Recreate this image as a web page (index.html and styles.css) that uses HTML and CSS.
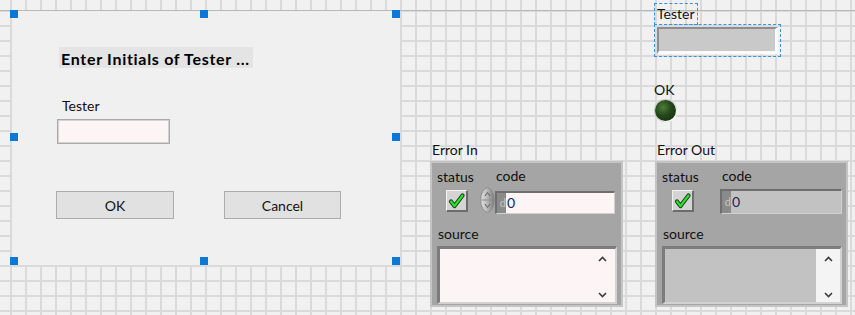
FILE: index.html
```html
<!DOCTYPE html>
<html lang="en">
<head>
    <meta charset="UTF-8">
    <title>Front Panel</title>
    <link rel="stylesheet" href="styles.css">
</head>
<body>
    <div class="panel">

        <!-- selected subpanel with the initials dialog -->
        <div class="dialog">
            <span class="handle h-tl"></span>
            <span class="handle h-tc"></span>
            <span class="handle h-tr"></span>
            <span class="handle h-ml"></span>
            <span class="handle h-mr"></span>
            <span class="handle h-bl"></span>
            <span class="handle h-bc"></span>
            <span class="handle h-br"></span>

            <div class="dialog-title">Enter Initials of Tester ...</div>
            <label class="dialog-label">Tester</label>
            <div class="dialog-input"></div>
            <div class="dialog-buttons">
                <button class="btn btn-ok">OK</button>
                <button class="btn btn-cancel">Cancel</button>
            </div>
        </div>

        <!-- Tester string indicator (selected) -->
        <div class="ctl tester-ctl">
            <span class="ctl-label sel-label">Tester</span>
            <div class="string-box">
                <div class="string-ind"></div>
            </div>
        </div>

        <!-- OK boolean LED -->
        <div class="ctl led-ctl">
            <span class="ctl-label">OK</span>
            <span class="led"></span>
        </div>

        <!-- Error In cluster -->
        <div class="ctl error-ctl error-in">
            <span class="ctl-label">Error In</span>
            <div class="cluster">
                <div class="cluster-top">
                    <div class="status-col">
                        <span class="field-label">status</span>
                        <span class="check-btn">
                            <svg width="18" height="18" viewBox="0 0 18 18">
                                <path d="M3 9.5 L6.5 14 L14.5 3.5" fill="none" stroke="#163f16" stroke-width="4.2" stroke-linecap="round" stroke-linejoin="round"/>
                                <path d="M3 9.5 L6.5 14 L14.5 3.5" fill="none" stroke="#2ee02e" stroke-width="2.2" stroke-linecap="round" stroke-linejoin="round"/>
                            </svg>
                        </span>
                    </div>
                    <div class="code-col">
                        <span class="field-label code-label">code</span>
                        <div class="code-row">
                            <svg class="spin" width="15" height="26" viewBox="0 0 15 26">
                                <defs>
                                    <linearGradient id="spinFill" x1="0" x2="1">
                                        <stop offset="0" stop-color="#e4e4e4"/>
                                        <stop offset="0.5" stop-color="#b4b4b4"/>
                                        <stop offset="1" stop-color="#7c7c7c"/>
                                    </linearGradient>
                                </defs>
                                <ellipse cx="7.5" cy="13" rx="6.8" ry="12.3" fill="url(#spinFill)" stroke="#8c8c8c"/>
                                <line x1="1.5" y1="13" x2="13.5" y2="13" stroke="#8a8a8a"/>
                                <path d="M5 9 L7.5 5.5 L10 9" fill="none" stroke="#5e5e5e"/>
                                <path d="M5 17 L7.5 20.5 L10 17" fill="none" stroke="#5e5e5e"/>
                            </svg>
                            <div class="numeric">
                                <span class="radix">d</span>
                                <span class="num-value">0</span>
                            </div>
                        </div>
                    </div>
                </div>
                <span class="field-label source-label">source</span>
                <div class="source-box">
                    <div class="source-text"></div>
                    <div class="scrollbar">
                        <svg width="9" height="6" viewBox="0 0 9 6"><path d="M1 5 L4.5 1.5 L8 5" fill="none" stroke="#3c3c3c" stroke-width="1.6"/></svg>
                        <svg width="9" height="6" viewBox="0 0 9 6"><path d="M1 1 L4.5 4.5 L8 1" fill="none" stroke="#3c3c3c" stroke-width="1.6"/></svg>
                    </div>
                </div>
            </div>
        </div>

        <!-- Error Out cluster -->
        <div class="ctl error-ctl error-out">
            <span class="ctl-label">Error Out</span>
            <div class="cluster">
                <div class="cluster-top">
                    <div class="status-col">
                        <span class="field-label">status</span>
                        <span class="check-btn">
                            <svg width="18" height="18" viewBox="0 0 18 18">
                                <path d="M3 9.5 L6.5 14 L14.5 3.5" fill="none" stroke="#163f16" stroke-width="4.2" stroke-linecap="round" stroke-linejoin="round"/>
                                <path d="M3 9.5 L6.5 14 L14.5 3.5" fill="none" stroke="#2ee02e" stroke-width="2.2" stroke-linecap="round" stroke-linejoin="round"/>
                            </svg>
                        </span>
                    </div>
                    <div class="code-col">
                        <span class="field-label code-label">code</span>
                        <div class="code-row">
                            <div class="numeric">
                                <span class="radix">d</span>
                                <span class="num-value">0</span>
                            </div>
                        </div>
                    </div>
                </div>
                <span class="field-label source-label">source</span>
                <div class="source-box">
                    <div class="source-text"></div>
                    <div class="scrollbar">
                        <svg width="9" height="6" viewBox="0 0 9 6"><path d="M1 5 L4.5 1.5 L8 5" fill="none" stroke="#3c3c3c" stroke-width="1.6"/></svg>
                        <svg width="9" height="6" viewBox="0 0 9 6"><path d="M1 1 L4.5 4.5 L8 1" fill="none" stroke="#3c3c3c" stroke-width="1.6"/></svg>
                    </div>
                </div>
            </div>
        </div>

    </div>
</body>
</html>
```

FILE: styles.css
```css
/* Global */
body {
    margin: 0;
    font-family: Lato, 'Open Sans', sans-serif;
    font-size: 14px;
    color: #111;
}

/* Front panel canvas with the alignment grid */
.panel {
    position: relative;
    width: 855px;
    height: 315px;
    overflow: hidden;
    background-color: #f1f1f1;
    background-image:
        linear-gradient(#b8b8b8, #b8b8b8),
        linear-gradient(to right, #dadada 2px, transparent 2px),
        linear-gradient(to bottom, #dadada 2px, transparent 2px);
    background-size: 100% 1px, 15px 15px, 15px 15px;
    background-position: 0 10px, 10px 0, 0 10px;
    background-repeat: no-repeat, repeat, repeat;
}

.ctl {
    position: absolute;
}

.ctl-label {
    display: block;
    line-height: 18px;
}

/* Dialog subpanel */
.dialog {
    position: absolute;
    left: 12px;
    top: 11px;
    width: 388px;
    height: 254px;
    box-sizing: border-box;
    padding: 36px 0 0 44px;
    background-color: #f0f0f0;
}

.handle {
    position: absolute;
    width: 8px;
    height: 8px;
    background-color: #0a78d7;
}

.h-tl { left: -2px; top: -1px; }
.h-tc { left: 188px; top: -1px; }
.h-tr { left: 380px; top: -1px; }
.h-ml { left: -2px; top: 122px; }
.h-mr { left: 380px; top: 122px; }
.h-bl { left: -2px; top: 246px; }
.h-bc { left: 188px; top: 246px; }
.h-br { left: 380px; top: 246px; }

.dialog-title {
    margin-left: 3px;
    width: 194px;
    height: 21px;
    box-sizing: border-box;
    padding: 1px 0 0 2px;
    background-color: #e4e4e4;
    font-weight: bold;
    font-size: 16px;
    line-height: 21px;
    letter-spacing: 0.7px;
    color: #000;
    white-space: nowrap;
}

.dialog-label {
    display: block;
    margin: 29px 0 0 6px;
    line-height: 18px;
}

.dialog-input {
    margin: 4px 0 0 1px;
    width: 113px;
    height: 25px;
    box-sizing: border-box;
    border: 1px solid #a9a9a9;
    box-shadow: inset 0 0 0 1px #d2d2d2;
    background-color: #fdf5f5;
}

.dialog-buttons {
    display: flex;
    gap: 50px;
    margin-top: 47px;
}

.btn {
    width: 118px;
    height: 28px;
    padding: 0;
    border: 1px solid #adadad;
    background-color: #e1e1e1;
    font-family: Lato, 'Open Sans', sans-serif;
    font-size: 14px;
    color: #111;
}

.btn-cancel {
    width: 117px;
}

/* Tester string indicator */
.tester-ctl {
    left: 654px;
    top: 3px;
}

.sel-label {
    display: inline-block;
    padding: 1px 2px;
    border: 1px dashed #3b8fdc;
}

.string-box {
    margin-top: -1px;
    width: 127px;
    height: 33px;
    box-sizing: border-box;
    padding: 2px;
    border: 1px dashed #3b8fdc;
}

.string-ind {
    height: 100%;
    box-sizing: border-box;
    border-style: solid;
    border-width: 2px 3px 3px 2px;
    border-color: #8e8e8e #fbfbfb #fbfbfb #8e8e8e;
    background-color: #c9c9c9;
}

/* OK LED */
.led-ctl {
    left: 654px;
    top: 81px;
}

.led {
    display: block;
    margin: 1px 0 0 1px;
    width: 21px;
    height: 21px;
    border-radius: 50%;
    background: radial-gradient(circle at 38% 35%, #4d7d3b 0, #24461a 45%, #132a0c 100%);
    box-shadow: 1px 1px 1px #ffffff, 0 0 0 1px #c8c8c8;
}

/* Error clusters */
.error-in {
    left: 430px;
    top: 141px;
}

.error-out {
    left: 655px;
    top: 141px;
}

.error-ctl .ctl-label {
    padding-left: 2px;
}

.cluster {
    margin-top: 2px;
    width: 193px;
    height: 146px;
    box-sizing: border-box;
    padding-top: 4px;
    border: 2px solid #c4c4c4;
    background-color: #a5a5a5;
}

.cluster-top {
    display: flex;
}

.status-col {
    display: flex;
    flex-direction: column;
    width: 48px;
}

.error-out .status-col {
    width: 63px;
}

.field-label {
    display: block;
    line-height: 18px;
    color: #111;
}

.status-col .field-label {
    margin: 1px 0 0 5px;
}

.check-btn {
    display: flex;
    align-items: center;
    justify-content: center;
    margin: 4px 0 0 14px;
    width: 22px;
    height: 22px;
    box-sizing: border-box;
    border-style: solid;
    border-width: 1px 2px 2px 1px;
    border-color: #f2f2f2 #6c6c6c #6c6c6c #f2f2f2;
    background-color: #d4d4d4;
}

.error-out .check-btn {
    margin-left: 15px;
}

.code-label {
    margin-left: 16px;
}

.error-out .code-label {
    margin-left: 2px;
}

.code-row {
    display: flex;
    align-items: flex-start;
    margin-top: 2px;
}

.spin {
    display: block;
}

.numeric {
    display: flex;
    margin-top: 4px;
    width: 120px;
    height: 23px;
    box-sizing: border-box;
    border-style: solid;
    border-width: 2px 1px 1px 2px;
    border-color: #6e6e6e #d0d0d0 #d0d0d0 #6e6e6e;
}

.error-out .numeric {
    margin-top: 2px;
    width: 122px;
    height: 25px;
}

.radix {
    width: 9px;
    background-color: #8a8a8a;
    color: #c4c4c4;
    font-size: 11px;
    line-height: 20px;
    text-align: right;
}

.num-value {
    flex: 1;
    padding-left: 1px;
    background-color: #fdf5f5;
    color: #102a5e;
    line-height: 20px;
}

.error-out .num-value {
    background-color: #c2c2c2;
    line-height: 22px;
}

.error-out .radix {
    line-height: 22px;
}

.source-label {
    margin: 11px 0 0 6px;
}

.source-box {
    display: flex;
    margin: 3px 0 0 5px;
    width: 180px;
    height: 58px;
    box-sizing: border-box;
    border-style: solid;
    border-width: 3px 2px 2px 3px;
    border-color: #7c7c7c #d2d2d2 #d2d2d2 #7c7c7c;
    background-color: #fdf5f5;
}

.source-text {
    flex: 1;
}

.error-out .source-text {
    background-color: #c2c2c2;
}

.scrollbar {
    display: flex;
    flex-direction: column;
    justify-content: space-between;
    align-items: center;
    width: 24px;
    box-sizing: border-box;
    padding: 7px 2px 4px 0;
}

.error-out .scrollbar {
    background-color: #f4f4f4;
    padding-right: 0;
}
```
